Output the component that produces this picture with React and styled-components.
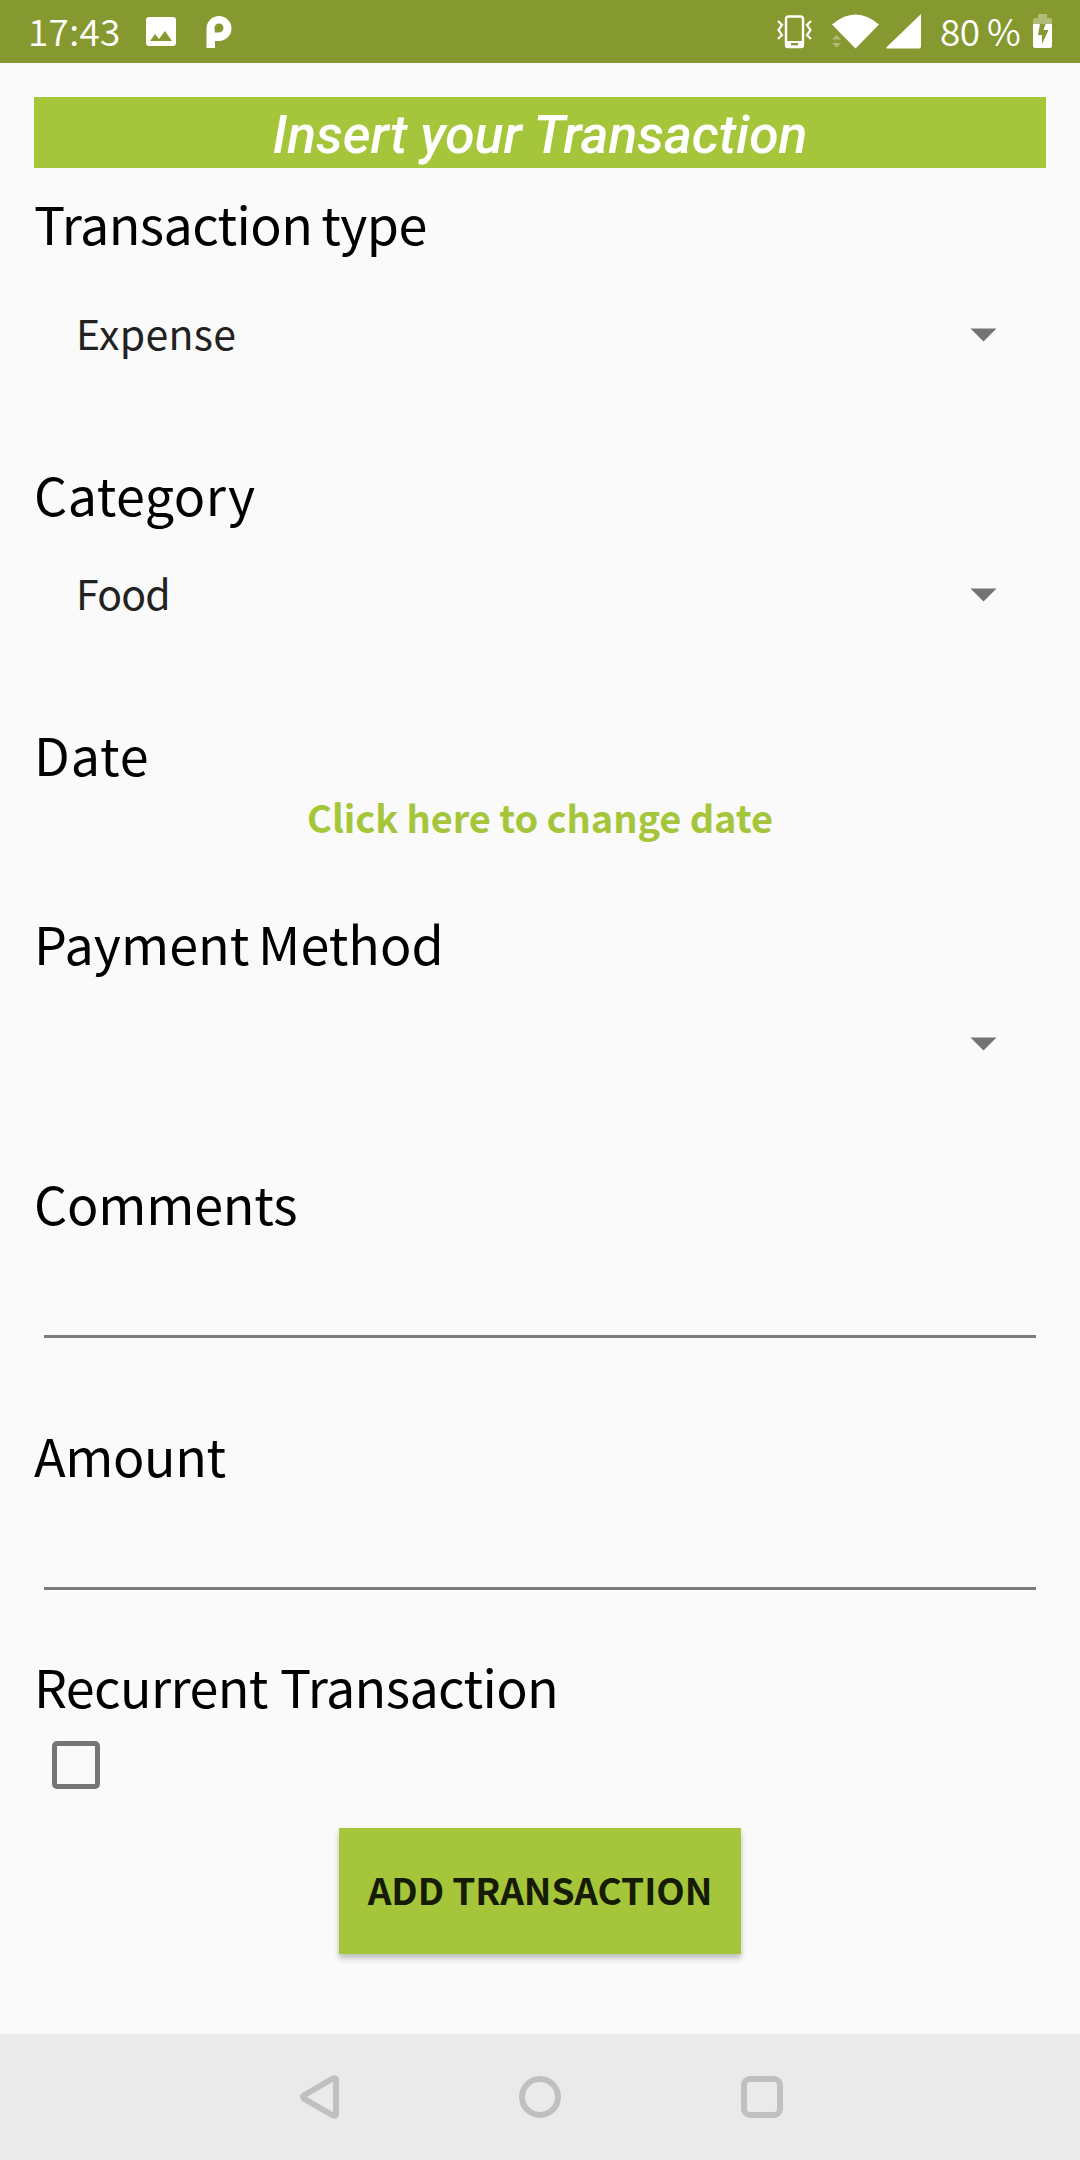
import React, { useState } from "react";
import styled, { createGlobalStyle } from "styled-components";

const GlobalStyle = createGlobalStyle`
  * { box-sizing: border-box; }
  body { margin: 0; background: #fafafa; }
  button, input { font: inherit; border: 0; padding: 0; background: none; }
`;

const Screen = styled.div`
  width: 1080px;
  height: 2160px;
  display: flex;
  flex-direction: column;
  background: #fafafa;
  color: #000;
  font-family: "Noto Sans CJK SC", "Noto Sans", sans-serif;
  overflow: hidden;
`;

const StatusBar = styled.header`
  height: 63px;
  flex: none;
  display: flex;
  align-items: center;
  background: #869931;
  color: #fff;
  padding: 0 19px 0 28px;
  svg { flex: none; display: block; }
`;

const StatusText = styled.span`
  font-weight: 350;
  font-size: 37px;
  line-height: 61px;
  height: 63px;
  white-space: nowrap;
  width: ${(p) => p.$width}px;
  letter-spacing: ${(p) => p.$track || 0}px;
`;

const StatusGroup = styled.div`
  display: flex;
  align-items: center;
  height: 63px;
  &:last-child { margin-left: auto; }
`;

const Form = styled.main`
  flex: 1;
  display: flex;
  flex-direction: column;
  padding: 34px 34px 0;
`;

const Title = styled.h1`
  margin: 0 0 19px;
  height: 71px;
  flex: none;
  background: #a5c63b;
  color: #fff;
  font: italic 500 53.5px/75px Roboto, sans-serif;
  letter-spacing: -0.07px;
  text-align: center;
  white-space: nowrap;
`;

const Field = styled.section`
  height: ${(p) => p.$height}px;
  flex: none;
  display: flex;
  flex-direction: column;
`;

const Label = styled.label`
  font-size: 52px;
  line-height: 72px;
  height: 72px;
  white-space: nowrap;
  letter-spacing: ${(p) => p.$track || 0}px;
  word-spacing: ${(p) => p.$word || 0}px;
`;

const Spinner = styled.button`
  display: flex;
  align-items: center;
  justify-content: space-between;
  height: 66px;
  margin-top: ${(p) => p.$gap}px;
  padding: 0 49px 0 42px;
  font-size: 41px;
  line-height: 66px;
  letter-spacing: ${(p) => p.$track || 0}px;
  color: #212121;
  svg { display: block; margin-top: 6px; }
`;

const DateLink = styled.button`
  height: 56px;
  margin-top: -1px;
  font-size: 38px;
  line-height: 56px;
  font-weight: 700;
  letter-spacing: -0.1px;
  color: #a5c63b;
`;

const TextInput = styled.input`
  height: 99px;
  margin: 0 10px;
  border-bottom: 3px solid #7b7b7b;
  outline: none;
`;

const CheckBox = styled.button`
  width: 48px;
  height: 48px;
  margin: 19px 0 0 18px;
  border: 5px solid #757575;
  border-radius: 5px;
`;

const AddButton = styled.button`
  width: 402px;
  height: 126px;
  padding-bottom: 4px;
  align-self: center;
  flex: none;
  background: #a5c63b;
  color: #161c04;
  font-size: 37px;
  font-weight: 700;
  letter-spacing: -0.1px;
  white-space: nowrap;
  box-shadow: 0 5px 6px rgba(0, 0, 0, 0.2), 0 1px 5px rgba(0, 0, 0, 0.08);
`;

const NavBar = styled.nav`
  height: 126px;
  flex: none;
  display: flex;
  justify-content: center;
  background: #eaeaea;
  svg { display: block; }
`;

const Arrow = () => (
  <svg width="27" height="14" viewBox="0 0 27 14"><path d="M.5.5h26L13.500 13.500z" fill="#737373" /></svg>
);

function Select({ value, gap, track }) {
  return <Spinner $gap={gap} $track={track}><span>{value}</span><Arrow /></Spinner>;
}

export default function App() {
  const [checked, setChecked] = useState(false);
  return (
    <Screen>
      <GlobalStyle />
      <StatusBar>
        <StatusGroup>
          <StatusText $width={118} $track={0.3}>17:43</StatusText>
          <svg width="120" height="63" viewBox="146 0 120 63" fill="#fff">
            <path fillRule="evenodd" d="M149 17h24a3 3 0 0 1 3 3v23a3 3 0 0 1-3 3h-24a3 3 0 0 1-3-3V20a3 3 0 0 1 3-3zM150 41h22l-7-10-6 8-4-5z" />
            <path fillRule="evenodd" d="M206.500 48V28.500a12.500 12.500 0 1 1 12.500 12.500h-4v7zM215 32.500h4a4.500 4.500 0 1 0-4.500-4.500z" />
          </svg>
        </StatusGroup>
        <StatusGroup>
          <svg width="164" height="63" viewBox="776 0 164 63">
            <rect x="786" y="16.500" width="17" height="30.500" rx="2.500" fill="none" stroke="#fff" strokeWidth="2.400" />
            <path d="M785 41h19v5q0 2-2 2h-15q-2 0-2-2zM791 43v2.500h7V43z" fill="#fff" fillRule="evenodd" />
            <path d="M778 21l4 4-3.500 5 3.500 5-4 4M811 21l-4 4 3.500 5-3.500 5 4 4" fill="none" stroke="#fff" strokeWidth="2.200" />
            <path d="M832 24.500q23.500-20 47 0L855.500 48.500z" fill="#fff" />
            <path d="M832 39.500l4.500-4.500 4.500 4.500zM832 43l4.500 4.500L841 43z" fill="#fff" opacity=".35" />
            <path d="M921 14v32.500q0 2-2 2h-32q-1.500 0-.5-1.300z" fill="#fff" />
          </svg>
          <StatusText $width={93} $track={-0.6}>80 %</StatusText>
          <svg width="28" height="63" viewBox="1033 0 28 63">
            <path d="M1033 24v-4q0-2 2-2h3v-4h9v4h3q2 0 2 2v4z" fill="#fff" opacity=".35" />
            <path d="M1033 24h19v22q0 2-2 2h-15q-2 0-2-2zM1040 24l-2 11h4v9l6.500-14h-5l2-6z" fill="#fff" fillRule="evenodd" />
          </svg>
        </StatusGroup>
      </StatusBar>
      <Form>
        <Title>Insert your Transaction</Title>
        <Field $height={271}>
          <Label $track={-0.6} $word={-2}>Transaction type</Label>
          <Select value="Expense" gap={40} track={0.3} />
        </Field>
        <Field $height={260}>
          <Label $track={0.5}>Category</Label>
          <Select value="Food" gap={29} track={-0.8} />
        </Field>
        <Field $height={189}>
          <Label $track={0.9}>Date</Label>
          <DateLink>Click here to change date</DateLink>
        </Field>
        <Field $height={260}>
          <Label $track={0.05} $word={-3}>Payment Method</Label>
          <Select value="" gap={29} />
        </Field>
        <Field $height={252}>
          <Label $track={-0.2}>Comments</Label>
          <TextInput aria-label="Comments" />
        </Field>
        <Field $height={231}>
          <Label $track={-0.4}>Amount</Label>
          <TextInput aria-label="Amount" />
        </Field>
        <Field $height={178}>
          <Label $track={-0.6} $word={1}>Recurrent Transaction</Label>
          <CheckBox role="checkbox" aria-checked={checked} onClick={() => setChecked(!checked)} />
        </Field>
        <AddButton>ADD TRANSACTION</AddButton>
      </Form>
      <NavBar>
        <svg width="486" height="126" viewBox="297 2034 486 126" fill="none" stroke="#c0c0c0" strokeWidth="6" strokeLinejoin="round">
          <path d="M304.500 2095L332 2079Q336 2077 336 2080.500V2113.500Q336 2117 332 2115L304.500 2099Q301.500 2097 304.500 2095z" />
          <circle cx="540" cy="2097" r="18" />
          <rect x="744" y="2079" width="36" height="36" rx="6" />
        </svg>
      </NavBar>
    </Screen>
  );
}
